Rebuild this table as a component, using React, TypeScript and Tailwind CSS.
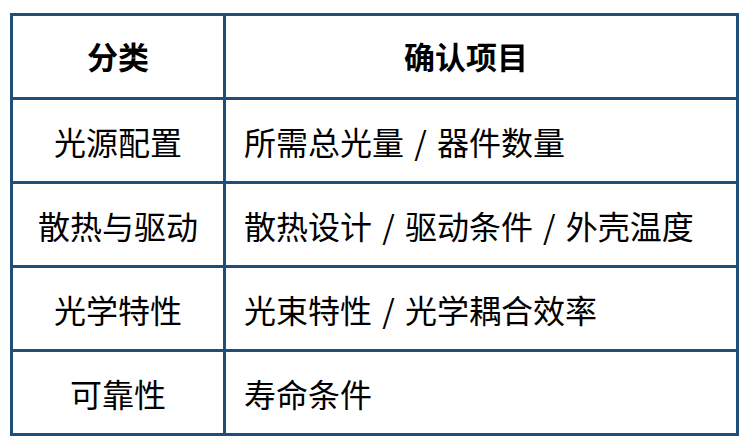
import React from "react";

const rows: [string, string][] = [
  ["光源配置", "所需总光量 / 器件数量"],
  ["散热与驱动", "散热设计 / 驱动条件 / 外壳温度"],
  ["光学特性", "光束特性 / 光学耦合效率"],
  ["可靠性", "寿命条件"],
];

export default function App() {
  return (
    <div
      className="w-[747px] h-[443px] bg-white pt-[13px] pl-[10px]"
      style={{ fontFamily: '"Noto Sans CJK SC", "Noto Sans", sans-serif' }}
    >
      <div className="w-[729px] bg-[#1f4e79] p-[3px] grid grid-cols-[210px_510px] gap-[3px]">
        <div className="bg-white h-[81px] flex items-center justify-center text-[31px] font-bold text-black">
          分类
        </div>
        <div className="bg-white h-[81px] flex items-center justify-center pr-[30px] text-[31px] font-bold text-black">
          确认项目
        </div>
        {rows.map(([a, b]) => (
          <React.Fragment key={a}>
            <div className="bg-white h-[81px] flex items-center justify-center text-[32px] text-black">
              {a}
            </div>
            <div className="bg-white h-[81px] flex items-center pl-[18px] text-[32px] text-black [word-spacing:3px]">
              {b}
            </div>
          </React.Fragment>
        ))}
      </div>
    </div>
  );
}
